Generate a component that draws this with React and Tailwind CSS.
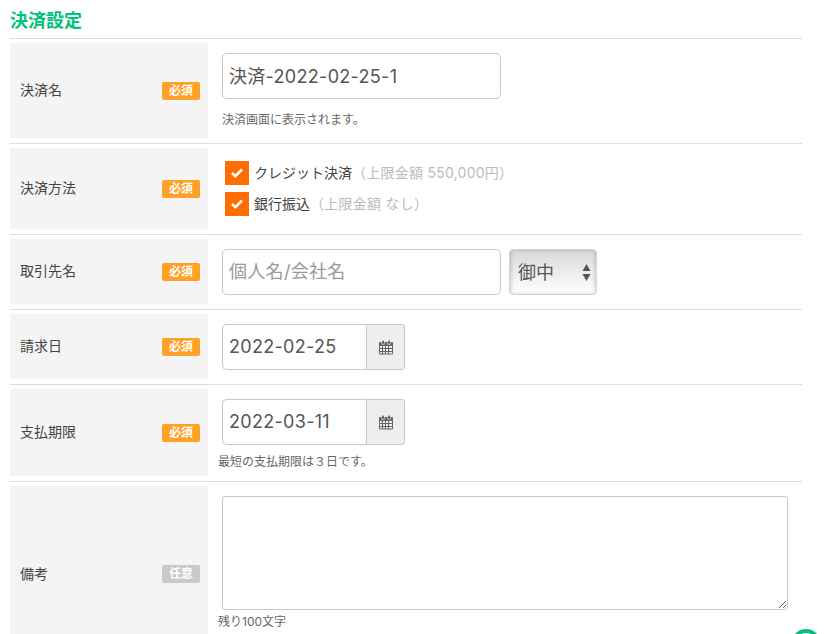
import { useState } from 'react';

const font = 'font-["Inter","Noto_Sans_CJK_JP",sans-serif]';

const Badge = ({ optional }) => (
  <span
    className={`w-[38px] h-[18px] shrink-0 rounded-[2px] flex items-center justify-center text-[12px] font-bold leading-none text-white ${
      optional ? 'bg-[#c9c9c9]' : 'bg-[#ffa126]'
    }`}
  >
    {optional ? '任意' : '必須'}
  </span>
);

const Row = ({ label, optional, height, children }) => (
  <div className="flex border-t border-[#dddddd] pt-[4px] pb-[5px]">
    <div className={`w-[198px] shrink-0 bg-[#f4f4f4] flex items-center justify-between pl-[10px] pr-[8px] ${height}`}>
      <span className="mb-[2px] text-[14px] text-[#444444]">{label}</span>
      <Badge optional={optional} />
    </div>
    <div className="flex-1 min-w-0">{children}</div>
  </div>
);

const inputClass =
  'h-[46px] border border-[#c8c8c8] px-[6px] pb-[2px] text-[18px] tracking-[0.3px] text-[#555555] outline-none placeholder:text-[#999999]';

const CalendarIcon = () => (
  <svg width="14" height="15" viewBox="0 0 14 15" fill="#666666">
    <rect x="3" y="0.5" width="2" height="3.5" rx="0.8" />
    <rect x="9" y="0.5" width="2" height="3.5" rx="0.8" />
    <path
      fillRule="evenodd"
      d="M1 2h1.5v2.5h3V2h3v2.5h3V2H13a1 1 0 0 1 1 1v10.5a1 1 0 0 1-1 1H1a1 1 0 0 1-1-1V3a1 1 0 0 1 1-1zM1 6v2h2V6zm3 0v2h2V6zm3 0v2h2V6h-2zm3 0v2h3V6zM1 9v2h2V9zm3 0v2h2V9zm3 0v2h2V9zm3 0v2h3V9zM1 12v1.5h2V12zm3 0v1.5h2V12zm3 0v1.5h2V12zm3 0v1.5h3V12z"
    />
  </svg>
);

const DateInput = ({ value, onChange }) => (
  <div className="flex w-[183px] h-[46px]">
    <input
      value={value}
      onChange={(e) => onChange(e.target.value)}
      className={`${inputClass} w-[144px] rounded-l-[5px] border-r-0`}
    />
    <div className="w-[39px] bg-[#eeeeee] border border-[#c8c8c8] rounded-r-[3px] flex items-center justify-center">
      <CalendarIcon />
    </div>
  </div>
);

const PayOption = ({ checked, onToggle, label, limit }) => (
  <label className="flex items-center h-[24px] cursor-pointer">
    <input type="checkbox" checked={checked} onChange={onToggle} className="sr-only" />
    <span className="w-[24px] h-[24px] bg-[#ff6d00] flex items-center justify-center">
      {checked && (
        <svg width="12" height="10" viewBox="0 0 12 10" fill="none" stroke="#ffffff" strokeWidth="2.6">
          <path d="M1 5l3.3 3.2L11 1.5" />
        </svg>
      )}
    </span>
    <span className="ml-[5px] mb-[2px] text-[14px] text-[#444444]">{label}</span>
    <span className="mb-[2px] text-[14px] tracking-[0.25px] text-[#bbbbbb]">{limit}</span>
  </label>
);

const App = () => {
  const [name, setName] = useState('決済-2022-02-25-1');
  const [credit, setCredit] = useState(true);
  const [bank, setBank] = useState(true);
  const [client, setClient] = useState('');
  const [honorific, setHonorific] = useState('御中');
  const [billDate, setBillDate] = useState('2022-02-25');
  const [dueDate, setDueDate] = useState('2022-03-11');
  const [note, setNote] = useState('');

  return (
    <div className={`relative h-[634px] overflow-hidden bg-white ${font}`}>
      <div className="w-[792px] ml-[10px]">
        <h2 className="h-[38px] pt-[9px] text-[18px] leading-[24px] font-bold text-[#00c27c]">決済設定</h2>

        <Row label="決済名" height="h-[95px]">
          <div className="pl-[14px] pt-[10px]">
            <input
              value={name}
              onChange={(e) => setName(e.target.value)}
              className={`${inputClass} w-[279px] rounded-[5px] block`}
            />
            <p className="mt-[13px] text-[12px] leading-[16px] text-[#666666]">決済画面に表示されます。</p>
          </div>
        </Row>

        <Row label="決済方法" height="h-[81px]">
          <div className="pl-[17px] pt-[13px] flex flex-col gap-[7px]">
            <PayOption
              checked={credit}
              onToggle={() => setCredit(!credit)}
              label="クレジット決済"
              limit="（上限金額 550,000円）"
            />
            <PayOption
              checked={bank}
              onToggle={() => setBank(!bank)}
              label="銀行振込"
              limit="（上限金額 なし）"
            />
          </div>
        </Row>

        <Row label="取引先名" height="h-[65px]">
          <div className="pl-[14px] pt-[10px] flex gap-[8px]">
            <input
              value={client}
              onChange={(e) => setClient(e.target.value)}
              placeholder="個人名/会社名"
              className={`${inputClass} w-[279px] rounded-[5px]`}
            />
            <div className="relative w-[88px] h-[46px]">
              <select
                value={honorific}
                onChange={(e) => setHonorific(e.target.value)}
                className="appearance-none w-full h-full rounded-[4px] border border-[#d4d4d4] pl-[8px] text-[18px] text-[#555555] outline-none bg-gradient-to-b from-[#d8d8d8] via-[#ececec] to-[#ffffff] shadow-[inset_2px_0_3px_rgba(0,0,0,0.12),inset_-2px_0_3px_rgba(0,0,0,0.1)]"
              >
                <option>御中</option>
                <option>様</option>
              </select>
              <svg
                className="absolute right-[6px] top-[15px] pointer-events-none"
                width="9"
                height="17"
                viewBox="0 0 9 17"
                fill="#555555"
              >
                <path d="M4.5 0L8.5 7H0.5zM0.5 10h8l-4 7z" />
              </svg>
            </div>
          </div>
        </Row>

        <Row label="請求日" height="h-[65px]">
          <div className="pl-[14px] pt-[10px]">
            <DateInput value={billDate} onChange={setBillDate} />
          </div>
        </Row>

        <Row label="支払期限" height="h-[87px]">
          <div className="pl-[14px] pt-[10px]">
            <DateInput value={dueDate} onChange={setDueDate} />
            <p className="-ml-[4px] mt-[9px] text-[12px] leading-[16px] text-[#666666]">最短の支払期限は３日です。</p>
          </div>
        </Row>

        <Row label="備考" optional height="h-[176px]">
          <div className="pl-[14px] pt-[10px]">
            <textarea
              value={note}
              onChange={(e) => setNote(e.target.value)}
              className="block w-[566px] h-[114px] border border-[#c8c8c8] rounded-[3px] outline-none"
            />
            <p className="-ml-[4px] mt-[4px] text-[12px] leading-[16px] text-[#666666]">残り100文字</p>
          </div>
        </Row>
      </div>

      {/* ヘルプボタン（下端で切れている） */}
      <div className="absolute left-[791px] top-[629px] w-[30px] h-[30px] rounded-full border-[4px] border-[#00c27c] bg-white" />
    </div>
  );
};

export default App;
